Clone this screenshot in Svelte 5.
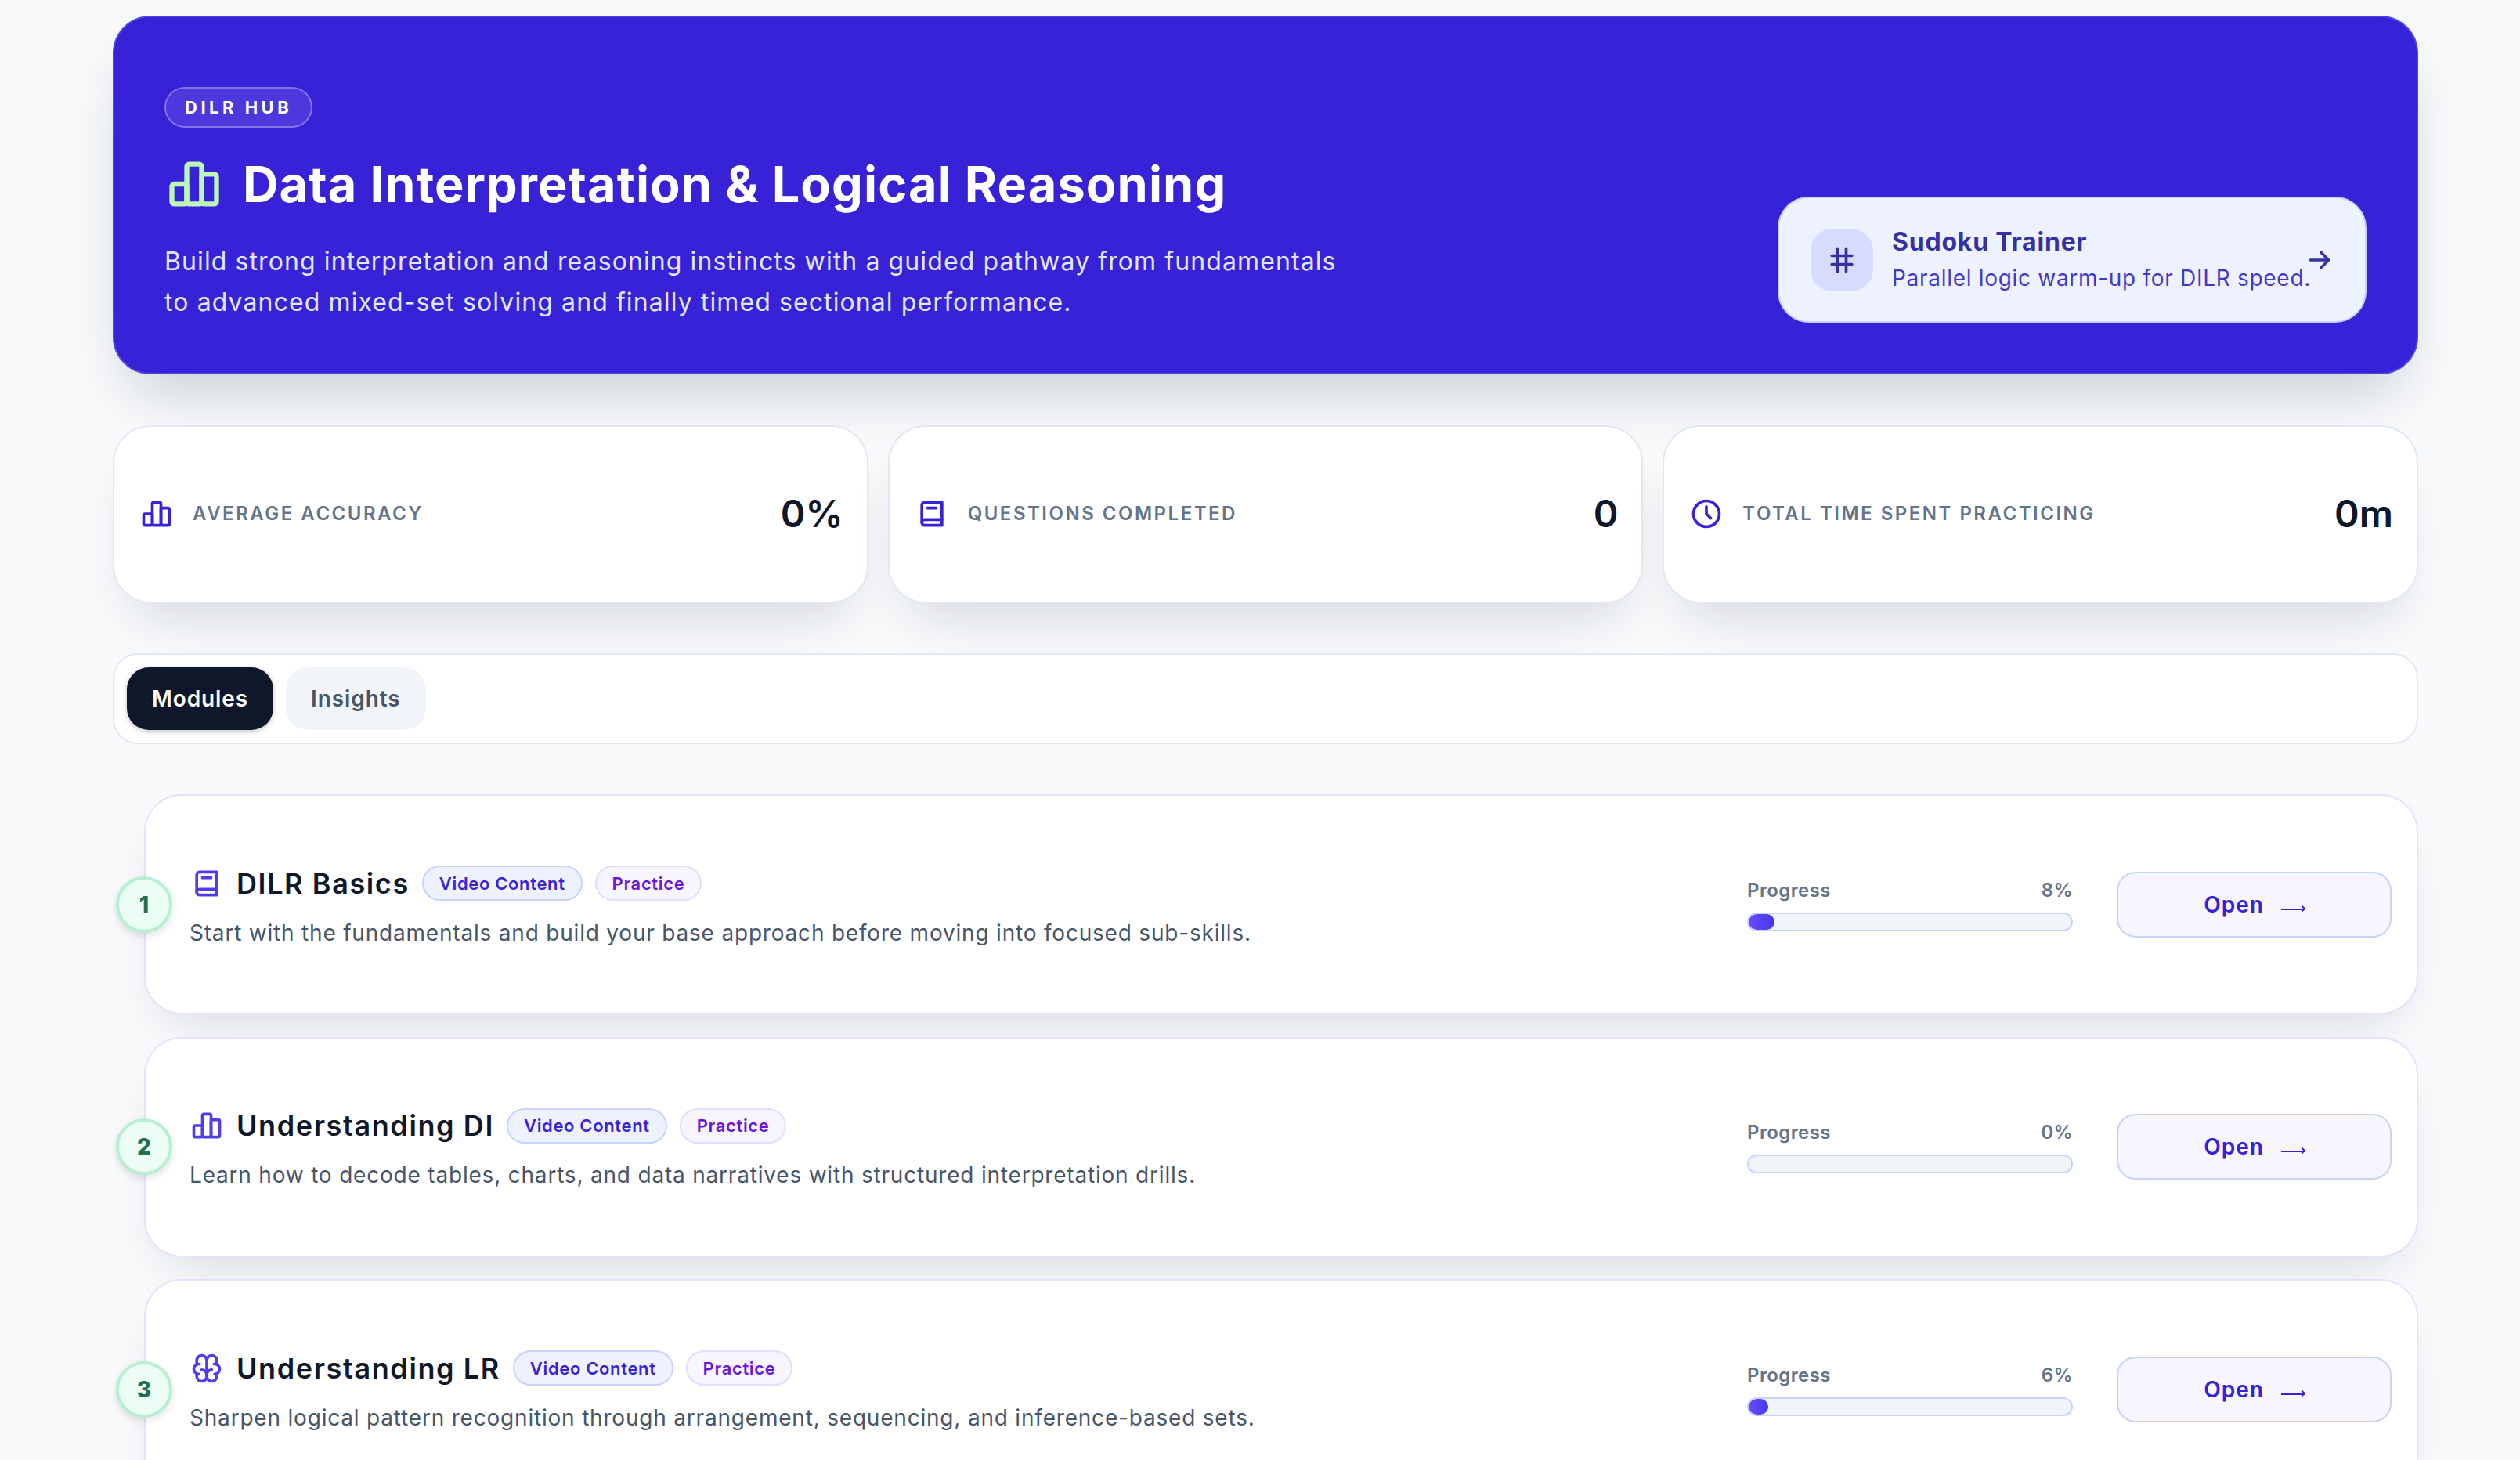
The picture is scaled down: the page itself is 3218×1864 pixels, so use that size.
<script>
  const stats = [
    { icon: 'chart', label: 'AVERAGE ACCURACY', value: '0%' },
    { icon: 'book', label: 'QUESTIONS COMPLETED', value: '0' },
    { icon: 'clock', label: 'TOTAL TIME SPENT PRACTICING', value: '0m' }
  ];
  const modules = [
    { n: 1, icon: 'book', title: 'DILR Basics', desc: 'Start with the fundamentals and build your base approach before moving into focused sub-skills.', pct: 8 },
    { n: 2, icon: 'chart', title: 'Understanding DI', desc: 'Learn how to decode tables, charts, and data narratives with structured interpretation drills.', pct: 0 },
    { n: 3, icon: 'brain', title: 'Understanding LR', desc: 'Sharpen logical pattern recognition through arrangement, sequencing, and inference-based sets.', pct: 6 }
  ];
</script>

{#snippet icon(name, cls)}
  <svg class={cls} viewBox="0 0 24 24" fill="none" stroke="currentColor" stroke-width="2" stroke-linecap="round" stroke-linejoin="round">
    {#if name === 'chart'}
      <path d="M3 13a1 1 0 0 1 1-1h4a1 1 0 0 1 1 1v6a1 1 0 0 1-1 1H4a1 1 0 0 1-1-1z" />
      <path d="M15 9a1 1 0 0 1 1-1h4a1 1 0 0 1 1 1v10a1 1 0 0 1-1 1h-4a1 1 0 0 1-1-1z" />
      <path d="M9 5a1 1 0 0 1 1-1h4a1 1 0 0 1 1 1v14a1 1 0 0 1-1 1h-4a1 1 0 0 1-1-1z" />
    {:else if name === 'book'}
      <path d="M19 4v16H7a2 2 0 0 1-2-2V6a2 2 0 0 1 2-2z" />
      <path d="M19 16H7a2 2 0 0 0-2 2" />
      <path d="M9 8h6" />
    {:else if name === 'clock'}
      <circle cx="12" cy="12" r="9" />
      <path d="M12 7v5l3 3" />
    {:else if name === 'brain'}
      <path d="M15.5 13a3.5 3.5 0 0 0-3.5 3.5v1a3.5 3.5 0 0 0 7 0v-1.8" />
      <path d="M8.5 13a3.5 3.5 0 0 1 3.5 3.5v1a3.5 3.5 0 0 1-7 0v-1.8" />
      <path d="M17.5 16a3.5 3.5 0 0 0 0-7H17" />
      <path d="M19 9.3V6.5a3.5 3.5 0 0 0-7 0" />
      <path d="M6.5 16a3.5 3.5 0 0 1 0-7H7" />
      <path d="M5 9.3V6.5a3.5 3.5 0 0 1 7 0v10" />
    {:else if name === 'grid'}
      <path d="M5 9h14M5 15h14M9 4v16M15 4v16" />
    {:else if name === 'arrow'}
      <path d="M5 12h14M13 18l6-6M13 6l6 6" />
    {/if}
  </svg>
{/snippet}

<main class="page">
  <section class="hero">
    <div class="hero-left">
      <span class="eyebrow">DILR HUB</span>
      <h1>{@render icon('chart', 'hero-icon')}<span>Data Interpretation &amp; Logical Reasoning</span></h1>
      <p>Build strong interpretation and reasoning instincts with a guided pathway from fundamentals to advanced mixed-set solving and finally timed sectional performance.</p>
    </div>
    <button class="trainer">
      <span class="trainer-box">{@render icon('grid', 'grid-icon')}</span>
      <span class="trainer-text">
        <strong>Sudoku Trainer</strong>
        <small>Parallel logic warm-up for DILR speed.</small>
      </span>
      {@render icon('arrow', 'trainer-arrow')}
    </button>
  </section>

  <section class="stats">
    {#each stats as s}
      <div class="stat">
        {@render icon(s.icon, 'stat-icon')}
        <span class="stat-label">{s.label}</span>
        <span class="stat-value">{s.value}</span>
      </div>
    {/each}
  </section>

  <nav class="tabs">
    <button class="tab active">Modules</button>
    <button class="tab">Insights</button>
  </nav>

  <section class="modules">
    {#each modules as m}
      <article class="module">
        <span class="step">{m.n}</span>
        <div class="module-main">
          <div class="module-head">
            {@render icon(m.icon, 'module-icon')}
            <h2>{m.title}</h2>
            <span class="pill video">Video Content</span>
            <span class="pill practice">Practice</span>
          </div>
          <p>{m.desc}</p>
        </div>
        <div class="progress">
          <div class="progress-head"><span>Progress</span><span>{m.pct}%</span></div>
          <div class="track"><div class="fill" style="width: {m.pct}%"></div></div>
        </div>
        <button class="open">Open <span class="open-arrow"></span></button>
      </article>
    {/each}
  </section>
</main>

<style>
  :global(body) {
    margin: 0;
    background: #f8fafc;
    font-family: Inter, "Liberation Sans", sans-serif;
  }
  :global(html), :global(body) { height: 1864px; overflow: hidden; }
  button { font-family: inherit; cursor: pointer; }
  .page {
    box-sizing: border-box;
    width: 2944px;
    margin-left: 144px;
    padding-top: 20px;
    display: flex;
    flex-direction: column;
    gap: 64px;
  }
  .hero {
    box-sizing: border-box;
    height: 458px;
    margin-bottom: 1px;
    padding: 64px;
    background: #3822d8;
    border: 2px solid #4f46e5;
    border-radius: 48px;
    display: flex;
    justify-content: space-between;
    align-items: flex-end;
    box-shadow: 0 40px 80px -24px rgba(15, 23, 42, 0.22);
  }
  .hero-left { width: 1530px; }
  .eyebrow {
    display: inline-flex;
    align-items: center;
    box-sizing: border-box;
    height: 52px;
    padding: 0 24px;
    border: 2px solid rgba(255, 255, 255, 0.3);
    border-radius: 26px;
    background: rgba(255, 255, 255, 0.1);
    color: #fff;
    font-size: 22px;
    font-weight: 700;
    letter-spacing: 4.5px;
  }
  h1 {
    margin: 28px 0 0;
    display: flex;
    align-items: center;
    gap: 24px;
    color: #fff;
    font-size: 63px;
    line-height: 88px;
    font-weight: 700;
    letter-spacing: 1.1px;
    white-space: nowrap;
  }
  :global(.hero-icon) { width: 76px; height: 76px; color: #bbf7b5; flex: none; }
  .hero-left p {
    margin: 29px 0 0;
    color: #e0e7ff;
    font-size: 32px;
    line-height: 52px;
    font-weight: 400;
    letter-spacing: 1.1px;
  }
  .trainer {
    box-sizing: border-box;
    width: 752px;
    height: 161px;
    padding: 0 40px;
    display: flex;
    align-items: center;
    gap: 24px;
    background: #eef2ff;
    border: 2px solid #c7d2fe;
    border-radius: 40px;
    text-align: left;
    flex: none;
  }
  .trainer-box {
    width: 80px;
    height: 80px;
    border-radius: 28px;
    background: #d6dcfd;
    color: #3730a3;
    display: grid;
    place-items: center;
    flex: none;
  }
  :global(.grid-icon) { width: 44px; height: 44px; }
  .trainer-text { display: flex; flex-direction: column; flex: 1; min-width: 0; gap: 6px; }
  .trainer-text strong { font-size: 32px; line-height: 40px; font-weight: 700; letter-spacing: 0.8px; color: #3730a3; }
  .trainer-text small { font-size: 28px; line-height: 40px; font-weight: 400; letter-spacing: 0.7px; color: #4338ca; white-space: nowrap; }
  :global(.trainer-arrow) { width: 40px; height: 40px; color: #3730a3; flex: none; margin-left: -20px; margin-right: -2px; }
  .stats { display: grid; grid-template-columns: repeat(3, 1fr); gap: 25px; }
  .stat {
    box-sizing: border-box;
    height: 227px;
    padding: 0 32px 2px;
    display: flex;
    align-items: center;
    gap: 24px;
    background: #fff;
    border: 2px solid #e2e8f0;
    border-radius: 48px;
    box-shadow: 0 40px 70px -30px rgba(15, 23, 42, 0.18);
  }
  :global(.stat-icon) { width: 44px; height: 44px; color: #3822d8; flex: none; }
  .stat-label { flex: 1; color: #64748b; font-size: 24px; font-weight: 600; letter-spacing: 2.5px; white-space: nowrap; }
  .stat-value { color: #0f172a; font-size: 48px; font-weight: 600; margin-right: -2px; }
  .tabs {
    box-sizing: border-box;
    height: 116px;
    padding: 16px;
    display: flex;
    gap: 16px;
    background: #fff;
    border: 2px solid #e2e8f0;
    border-radius: 32px;
  }
  .tab {
    height: 80px;
    padding: 0 32px;
    border: 0;
    border-radius: 28px;
    background: #f1f5f9;
    color: #475569;
    font-size: 28px;
    font-weight: 600;
    letter-spacing: 0.9px;
  }
  .tab.active { background: #0f172a; color: #fff; box-shadow: 0 2px 6px rgba(15, 23, 42, 0.25); }
  .modules { display: flex; flex-direction: column; gap: 28.5px; padding-left: 40px; }
  .module {
    position: relative;
    box-sizing: border-box;
    height: 281px;
    padding: 0 32px 0 56px;
    display: flex;
    align-items: center;
    background: #fff;
    border: 2px solid #e5e2fb;
    border-radius: 48px;
    box-shadow: 0 30px 70px -30px rgba(15, 23, 42, 0.18);
  }
  .step {
    position: absolute;
    left: -38px;
    top: 50%;
    transform: translateY(-50%);
    box-sizing: border-box;
    width: 72px;
    height: 72px;
    border-radius: 50%;
    border: 4px solid #b7f0d0;
    background: #ecfdf5;
    color: #1f6f50;
    font-size: 28px;
    font-weight: 800;
    display: grid;
    place-items: center;
    box-shadow: 0 4px 10px rgba(15, 23, 42, 0.12);
  }
  .module-main { flex: 1; min-width: 0; margin-top: 8px; }
  .module-head { display: flex; align-items: center; gap: 16px; height: 46px; }
  :global(.module-icon) { width: 44px; height: 44px; color: #4f3df0; flex: none; }
  h2 { margin: 0; color: #0f172a; font-size: 36px; line-height: 46px; font-weight: 600; letter-spacing: 1.6px; white-space: nowrap; }
  .pill {
    box-sizing: border-box;
    height: 45px;
    display: inline-flex;
    align-items: center;
    padding: 0 20px;
    border-radius: 23px;
    font-size: 22px;
    font-weight: 600;
    letter-spacing: 0.65px;
    border: 2px solid;
  }
  .pill.video { background: #eef2ff; border-color: #c7d2fe; color: #3822d8; }
  .pill.practice { background: #f7f5ff; border-color: #e2dcfe; color: #6d14dc; }
  .module-main p { margin: 18px 0 0; color: #475569; font-size: 28px; line-height: 44px; letter-spacing: 0.8px; white-space: nowrap; }
  .progress { width: 416px; flex: none; margin-right: 56px; }
  .progress-head { display: flex; justify-content: space-between; color: #64748b; font-size: 24px; line-height: 32px; font-weight: 600; letter-spacing: 0.4px; }
  .track { box-sizing: border-box; height: 24px; margin-top: 12px; border: 2px solid #c7d2fe; border-radius: 12px; background: #f1f5f9; overflow: hidden; }
  .fill { height: 100%; border-radius: 10px; background: linear-gradient(90deg, #6d4aff, #4338ea); }
  .open {
    box-sizing: border-box;
    width: 351px;
    height: 84px;
    flex: none;
    display: flex;
    align-items: center;
    justify-content: center;
    gap: 22px;
    background: #f7f6ff;
    border: 2px solid #c7d2fe;
    border-radius: 24px;
    color: #3822d8;
    font-size: 28px;
    font-weight: 600;
    letter-spacing: 1px;
  }
  .open-arrow { position: relative; width: 30px; height: 2px; margin-top: 12px; background: #3822d8; }
  .open-arrow::after {
    content: "";
    position: absolute;
    right: 0;
    top: -3px;
    width: 6px;
    height: 6px;
    border-top: 2px solid #3822d8;
    border-right: 2px solid #3822d8;
    box-sizing: border-box;
    transform: rotate(45deg);
  }
</style>
